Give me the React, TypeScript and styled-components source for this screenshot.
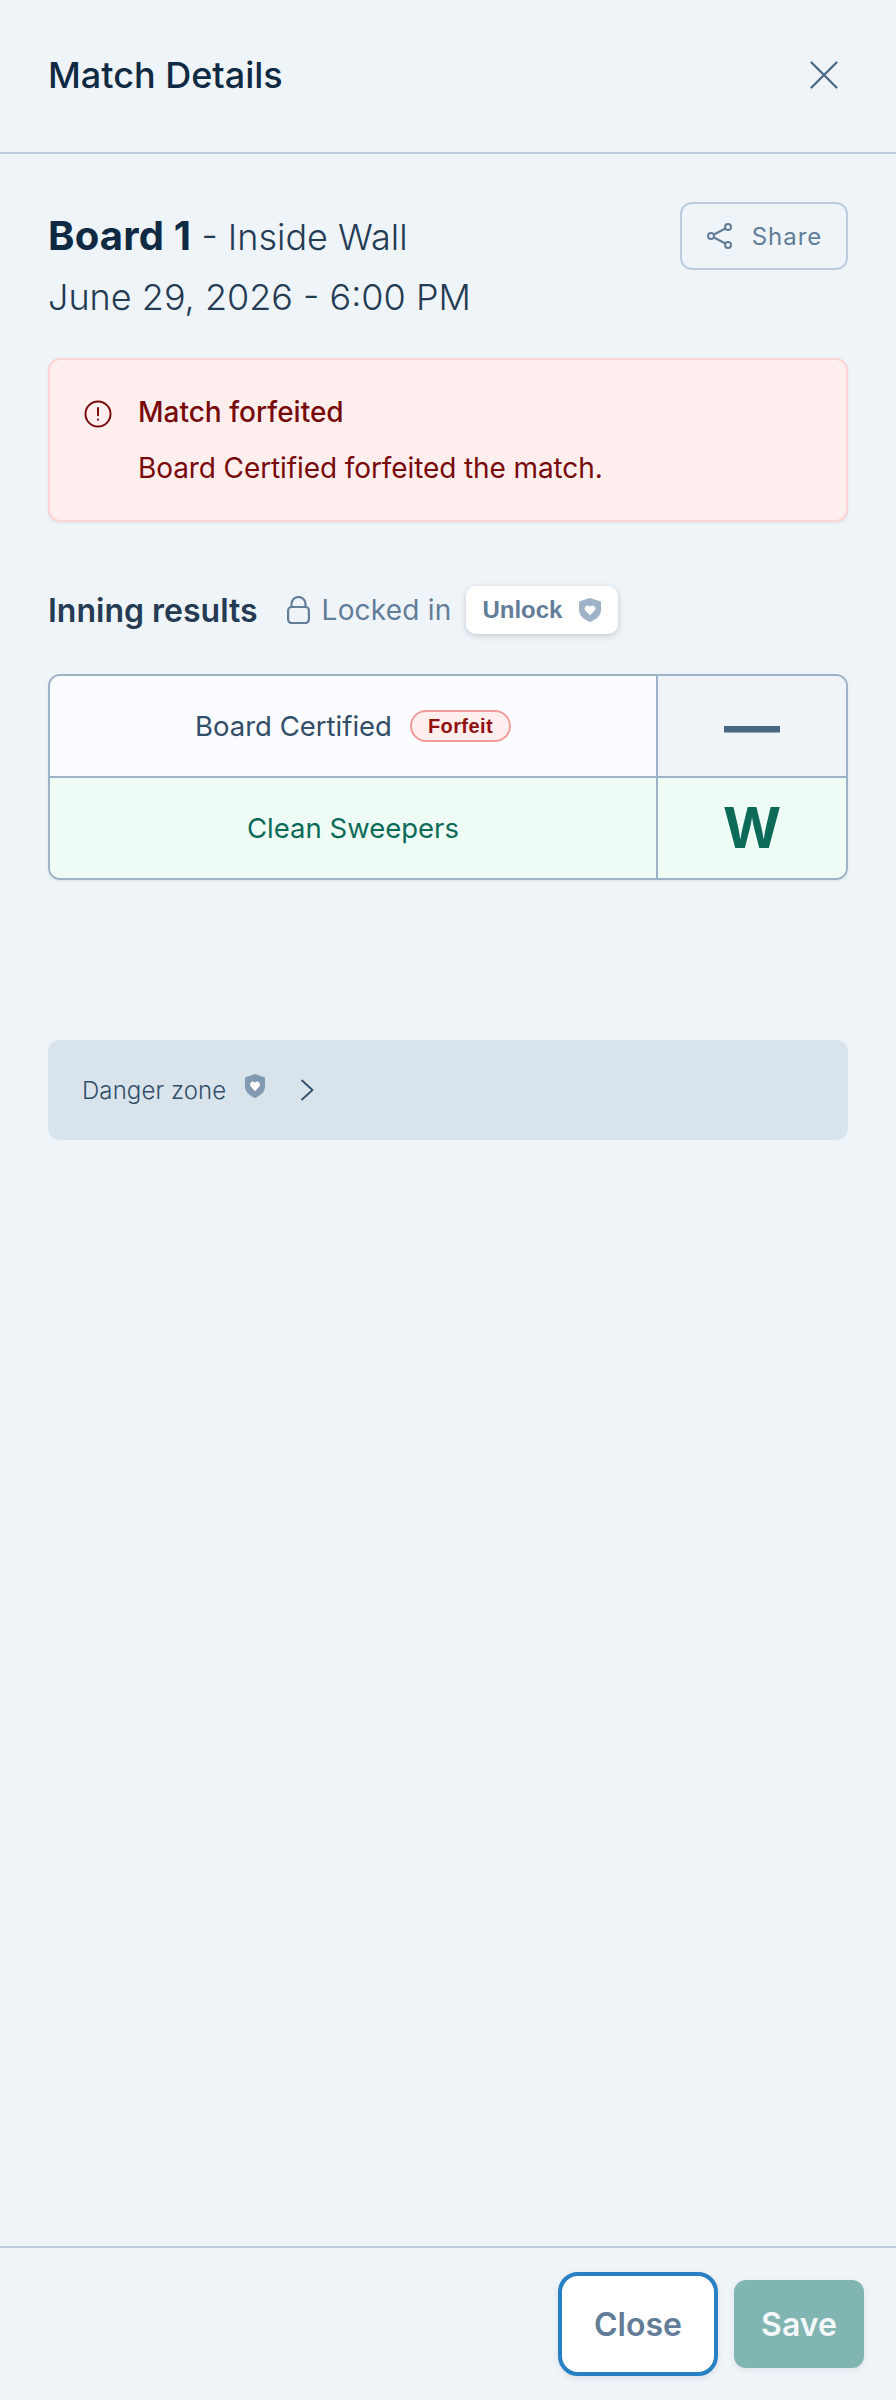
import React from "react";
import styled, { createGlobalStyle } from "styled-components";

const Global = createGlobalStyle`
  html, body { margin: 0; padding: 0; background: #eff4f8; }
  body { font-family: Inter, "Liberation Sans", sans-serif; }
  * { box-sizing: border-box; }
`;

const Page = styled.div`
  width: 896px;
  height: 2400px;
  display: flex;
  flex-direction: column;
  background: #eff4f8;
`;

const Header = styled.header`
  height: 154px;
  flex: none;
  display: flex;
  align-items: center;
  justify-content: space-between;
  padding: 0 58px 2px 48px;
  border-bottom: 2px solid #bccce0;
`;

const Title = styled.h2`
  margin: 0;
  font-size: 36px;
  line-height: 44px;
  font-weight: 500;
  color: #102a43;
`;

const IconButton = styled.button`
  border: 0;
  background: none;
  padding: 0;
  width: 28px;
  height: 28px;
  display: flex;
  color: #486581;
`;

const Body = styled.main`
  flex: 1;
  padding: 48px 48px 0;
  display: flex;
  flex-direction: column;
`;

const MatchHead = styled.div`
  display: flex;
  justify-content: space-between;
  align-items: flex-start;
`;

const MatchInfo = styled.div`
  padding-top: 4px;
`;

const MatchLine = styled.div`
  font-size: 36px;
  line-height: 60px;
  font-weight: 300;
  color: #243b53;
`;

const Strong = styled.strong`
  font-size: 40px;
  font-weight: 700;
  letter-spacing: 0.2px;
  color: #102a43;
`;

const ShareButton = styled.button`
  width: 168px;
  height: 68px;
  border: 2px solid #bccce0;
  border-radius: 12px;
  background: transparent;
  display: flex;
  align-items: center;
  justify-content: center;
  gap: 18px;
  font: 400 24px Inter, sans-serif;
  color: #627d98;
  letter-spacing: 1px;
`;

const Alert = styled.section`
  margin-top: 31px;
  height: 164px;
  border: 2px solid #fbd5d5;
  border-radius: 12px;
  background: #ffeeee;
  box-shadow: 0 1px 3px rgba(16, 42, 67, 0.08);
  padding: 32px 32px 0;
  display: grid;
  grid-template-columns: 32px 1fr;
  column-gap: 24px;
  color: #780a0a;
`;

const AlertIcon = styled.div`
  padding-top: 6px;
  display: flex;
`;

const AlertTitle = styled.div`
  font-size: 28px;
  line-height: 40px;
  font-weight: 500;
`;

const AlertText = styled.div`
  font-size: 28px;
  line-height: 40px;
  letter-spacing: -0.1px;
  margin-top: 16px;
`;

const ResultsHead = styled.div`
  margin-top: 64px;
  height: 48px;
  display: flex;
  align-items: center;
`;

const SectionTitle = styled.h3`
  margin: 0;
  font-size: 32px;
  font-weight: 600;
  color: #243b53;
`;

const LockedLabel = styled.div`
  margin-left: 29px;
  display: flex;
  align-items: center;
  gap: 12px;
  font-size: 28px;
  letter-spacing: 0.2px;
  color: #627d98;
`;

const UnlockButton = styled.button`
  margin-left: 15px;
  width: 152px;
  height: 48px;
  border: 0;
  border-radius: 10px;
  background: #fff;
  box-shadow: 0 2px 6px rgba(16, 42, 67, 0.2);
  display: flex;
  align-items: center;
  justify-content: center;
  gap: 16px;
  font: 700 24px "Liberation Sans", sans-serif;
  color: #627d98;
`;

const Table = styled.div`
  margin-top: 40px;
  border: 2px solid #9fb3c8;
  border-radius: 12px;
  overflow: hidden;
  display: grid;
  grid-template-columns: 1fr 188px;
  grid-template-rows: 100px 102px;
  box-shadow: 0 1px 3px rgba(16, 42, 67, 0.08);
`;

const TeamCell = styled.div<{ $win?: boolean }>`
  display: flex;
  align-items: center;
  justify-content: center;
  gap: 18px;
  font-size: 27.5px;
  background: ${(p) => (p.$win ? "#effcf6" : "#fbfcff")};
  color: ${(p) => (p.$win ? "#0c6b58" : "#334e68")};
  border-right: 2px solid #9fb3c8;
  border-top: ${(p) => (p.$win ? "2px solid #9fb3c8" : "0")};
`;

const ScoreCell = styled.div<{ $win?: boolean }>`
  display: flex;
  align-items: center;
  justify-content: center;
  background: ${(p) => (p.$win ? "#effcf6" : "#f0f4f8")};
  border-top: ${(p) => (p.$win ? "2px solid #9fb3c8" : "0")};
  color: ${(p) => (p.$win ? "#0c6b58" : "#486581")};
  font: 700 56px Inter, sans-serif;
`;

const Badge = styled.span`
  height: 32px;
  padding: 0 16px;
  border: 2px solid #f29b9b;
  border-radius: 16px;
  background: #ffeeee;
  display: inline-flex;
  align-items: center;
  font: 700 20px "Liberation Sans", sans-serif;
  letter-spacing: 0.4px;
  color: #911111;
`;

const Danger = styled.div`
  margin-top: 160px;
  height: 100px;
  border-radius: 12px;
  background: #d8e3ec;
  padding: 0 34px;
  display: flex;
  align-items: center;
  font-size: 24px;
  font-weight: 300;
  letter-spacing: 0.1px;
  color: #334e68;
`;

const DangerShield = styled.span`
  margin: 0 0 8px 18px;
  display: flex;
`;

const DangerChevron = styled.span`
  margin-left: 34px;
  display: flex;
`;

const Footer = styled.footer`
  height: 154px;
  flex: none;
  border-top: 2px solid #bccce0;
  padding: 24px 32px 0 0;
  display: flex;
  justify-content: flex-end;
  align-items: flex-start;
  gap: 16px;
`;

const CloseButton = styled.button`
  width: 160px;
  height: 104px;
  border: 4px solid #2680c2;
  border-radius: 20px;
  background: #fff;
  box-shadow: 0 2px 6px rgba(16, 42, 67, 0.1);
  font: 600 32px Inter, sans-serif;
  color: #627d98;
`;

const SaveButton = styled.button`
  margin-top: 8px;
  width: 130px;
  height: 88px;
  border: 0;
  border-radius: 12px;
  background: #81b5b1;
  box-shadow: 0 2px 6px rgba(16, 42, 67, 0.08);
  font: 600 32px Inter, sans-serif;
  color: #f4f8f9;
`;

const Shield = ({ width, color }: { width: number; color: string }) => (
  <svg width={width} height={24} viewBox="0 0 24 24" preserveAspectRatio="none" fill={color}>
    <path d="M12 0 23 3.6v8.2c0 5.8-4.6 9.8-11 12.2C5.6 21.6 1 17.6 1 11.8V3.6z" />
    <path
      d="M12 17.2 7.6 12.8a3 3 0 0 1 0-4.2 3 3 0 0 1 4.2 0l.2.3.2-.3a3 3 0 0 1 4.2 0 3 3 0 0 1 0 4.2z"
      fill="#fff"
    />
  </svg>
);

export default function App() {
  return (
    <Page>
      <Global />
      <Header>
        <Title>Match Details</Title>
        <IconButton aria-label="Close">
          <svg width="28" height="28" viewBox="0 0 28 28" fill="none" stroke="currentColor" strokeWidth="2.2" strokeLinecap="round">
            <path d="M1.5 1.5 26.5 26.5M26.5 1.5 1.5 26.5" />
          </svg>
        </IconButton>
      </Header>
      <Body>
        <MatchHead>
          <MatchInfo>
            <MatchLine><Strong>Board 1</Strong> - Inside Wall</MatchLine>
            <MatchLine>June 29, 2026 - 6:00 PM</MatchLine>
          </MatchInfo>
          <ShareButton>
            <svg width="28" height="28" viewBox="0 0 28 28" fill="none" stroke="#627d98" strokeWidth="2">
              <circle cx="22" cy="5" r="3" />
              <circle cx="5" cy="14" r="3" />
              <circle cx="22" cy="23" r="3" />
              <path d="M8 12.5 19.3 6.5M8 15.5 19.3 21.5" />
            </svg>
            Share
          </ShareButton>
        </MatchHead>
        <Alert>
          <AlertIcon>
            <svg width="32" height="32" viewBox="0 0 24 24" fill="none" stroke="#780a0a" strokeWidth="1.5" strokeLinecap="round">
              <circle cx="12" cy="12" r="9.4" />
              <path d="M12 7.5v5.5M12 16.2v.1" />
            </svg>
          </AlertIcon>
          <div>
            <AlertTitle>Match forfeited</AlertTitle>
            <AlertText>Board Certified forfeited the match.</AlertText>
          </div>
        </Alert>
        <ResultsHead>
          <SectionTitle>Inning results</SectionTitle>
          <LockedLabel>
            <svg width="23" height="28" viewBox="0 0 23 28" fill="none" stroke="#627d98" strokeWidth="2.2">
              <rect x="1.1" y="11" width="20.8" height="16" rx="3.5" />
              <path d="M4.5 11V8a7 7 0 0 1 14 0V11" />
            </svg>
            Locked in
          </LockedLabel>
          <UnlockButton>
            Unlock
            <Shield width={24} color="#9fb3c8" />
          </UnlockButton>
        </ResultsHead>
        <Table>
          <TeamCell>
            Board Certified
            <Badge>Forfeit</Badge>
          </TeamCell>
          <ScoreCell>—</ScoreCell>
          <TeamCell $win>Clean Sweepers</TeamCell>
          <ScoreCell $win>W</ScoreCell>
        </Table>
        <Danger>
          Danger zone
          <DangerShield><Shield width={22} color="#829ab1" /></DangerShield>
          <DangerChevron>
            <svg width="14" height="22" viewBox="0 0 14 22" fill="none" stroke="#334e68" strokeWidth="1.8" strokeLinecap="round" strokeLinejoin="round">
              <path d="M2 1.5 12.5 11 2 20.5" />
            </svg>
          </DangerChevron>
        </Danger>
      </Body>
      <Footer>
        <CloseButton>Close</CloseButton>
        <SaveButton>Save</SaveButton>
      </Footer>
    </Page>
  );
}
